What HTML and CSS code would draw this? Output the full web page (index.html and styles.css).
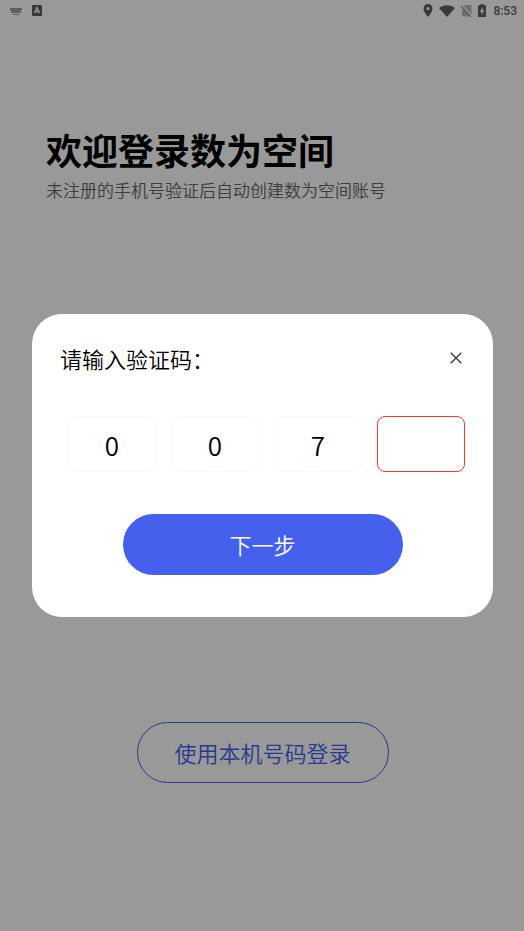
FILE: index.html
```html
<!DOCTYPE html>
<html lang="zh-CN">
<head>
<meta charset="utf-8">
<meta name="viewport" content="width=device-width, initial-scale=1">
<title>登录</title>
<link rel="stylesheet" href="styles.css">
</head>
<body>
<div class="page">
  <header class="status">
    <div class="status-group status-left">
      <svg width="12" height="8" viewBox="0 0 12 8" aria-hidden="true">
        <path d="M0 1h12v2H0zM1 3h10v2H1z" fill="#aaa"/>
        <path d="M0 1.500h12M1 3.500h10" stroke="#808080" stroke-dasharray="1 1"/>
        <path d="M1 5.500h10M3 7.500h6" stroke="#999"/>
      </svg>
      <svg width="10" height="11" viewBox="0 0 10 11" aria-hidden="true">
        <rect width="10" height="11" rx="1" fill="#606060"/>
        <path d="M2.500 8L5 2.500 7.500 8M3.500 6.500h3" fill="none" stroke="#fff" stroke-width="1.300"/>
      </svg>
    </div>
    <div class="status-group status-right">
      <svg width="10" height="13" viewBox="0 0 10 13" aria-hidden="true">
        <path fill="#606060" fill-rule="evenodd" d="M5 0a4.500 4.500 0 0 0-4.500 4.500C.5 8 5 13 5 13s4.500-5 4.500-8.500A4.500 4.500 0 0 0 5 0zm0 3a1.600 1.600 0 1 1 0 3.200A1.600 1.600 0 0 1 5 3z"/>
      </svg>
      <svg width="16" height="12" viewBox="0 0 16 12" aria-hidden="true">
        <path fill="#606060" d="M0 3C4.500-.6 11.500-.6 16 3L8 12z"/>
      </svg>
      <svg width="11" height="12" viewBox="0 0 11 12" aria-hidden="true">
        <path fill="#bbb" d="M4 0h6.500v11.500H1V3z"/>
        <path d="M1.500 .5L11 11" stroke="#fff" stroke-width="1.200"/>
        <path d="M0 .8L10 11.800" stroke="#999" stroke-width="1.200"/>
      </svg>
      <svg width="8" height="13" viewBox="0 0 8 13" aria-hidden="true">
        <path fill="#606060" d="M2.500 0h3v1.300H8V13H0V1.300h2.500z"/>
        <path fill="#fff" d="M4.800 3L1.700 7.700h1.900V11l2.900-4.700H4.700z"/>
      </svg>
      <span class="clock">8:53</span>
    </div>
  </header>
  <main class="login">
    <h1 class="title">欢迎登录数为空间</h1>
    <p class="subtitle">未注册的手机号验证后自动创建数为空间账号</p>
    <button class="pill local-login" type="button">使用本机号码登录</button>
  </main>
</div>
<div class="overlay">
  <form class="dialog" role="dialog" aria-labelledby="prompt">
    <div class="dialog-head">
      <h2 class="prompt" id="prompt">请输入验证码：</h2>
      <button class="close" type="button" aria-label="关闭">
        <svg width="12" height="12" viewBox="0 0 12 12" aria-hidden="true"><path d="M.7.7l10.600 10.600M11.300.7L.7 11.300" stroke="#333" stroke-width="1.300"/></svg>
      </button>
    </div>
    <div class="code">
      <input class="digit" type="text" inputmode="numeric" maxlength="1" value="0" aria-label="验证码第1位">
      <input class="digit" type="text" inputmode="numeric" maxlength="1" value="0" aria-label="验证码第2位">
      <input class="digit" type="text" inputmode="numeric" maxlength="1" value="7" aria-label="验证码第3位">
      <input class="digit current" type="text" inputmode="numeric" maxlength="1" aria-label="验证码第4位">
    </div>
    <button class="pill next" type="submit">下一步</button>
  </form>
</div>
</body>
</html>
```

FILE: styles.css
```css
* {
  box-sizing: border-box;
}

body,
button,
input {
  font-family: "Noto Sans CJK SC", sans-serif;
  font-weight: 350;
}

body {
  margin: 0;
  background: #fff;
  color: #000;
}

svg {
  display: block;
}

.page {
  min-height: 100vh;
  display: flex;
  flex-direction: column;
}

.status {
  display: flex;
  justify-content: space-between;
  height: 21px;
  padding: 0 7px 0 10px;
}

.status-group {
  display: flex;
  align-items: center;
}

.status-left {
  gap: 10px;
}

.status-right {
  gap: 6px;
}

.clock {
  padding-left: 1px;
  font: 500 12px/22px Roboto, sans-serif;
  color: #606060;
}

.login {
  flex: 1;
  display: flex;
  flex-direction: column;
  padding: 102px 45px 148px 46px;
}

.title {
  margin: 0;
  font-size: 36px;
  line-height: 52px;
  font-weight: 700;
}

.subtitle {
  margin: 0;
  font-size: 17px;
  line-height: 30px;
  color: #666;
  white-space: nowrap;
}

.pill {
  display: block;
  padding: 0 0 2px;
  border-radius: 31px;
  font-size: 22px;
  line-height: 32px;
}

.local-login {
  width: 252px;
  height: 61px;
  margin: auto auto 0;
  border: 1px solid #4460ed;
  background: transparent;
  color: #4460ed;
}

.overlay {
  position: fixed;
  inset: 0;
  display: flex;
  align-items: center;
  padding: 0 31px 0 32px;
  background: rgba(0, 0, 0, 0.4);
}

.dialog {
  flex: 1;
  min-width: 0;
  padding: 27px 28px 42px;
  border-radius: 30px;
  background: #fff;
}

.dialog-head {
  display: flex;
  align-items: center;
  justify-content: space-between;
}

.prompt {
  margin: 0;
  font-size: 22px;
  line-height: 34px;
  font-weight: 350;
}

.close {
  padding: 3px;
  border: 0;
  background: none;
}

.code {
  display: grid;
  grid-template-columns: repeat(4, 1fr);
  gap: 15px;
  margin: 41px 0 42px 8px;
}

.digit {
  width: 100%;
  min-width: 0;
  height: 56px;
  padding: 0;
  border: 1px solid #f9f9f9;
  border-radius: 8px;
  outline: 0;
  background: #fff;
  color: #000;
  font-size: 26px;
  text-align: center;
}

.digit.current {
  border-color: #f33;
}

.next {
  width: 280px;
  height: 61px;
  margin: 0 auto;
  border: 0;
  background: #4460ed;
  color: #fff;
}
```
